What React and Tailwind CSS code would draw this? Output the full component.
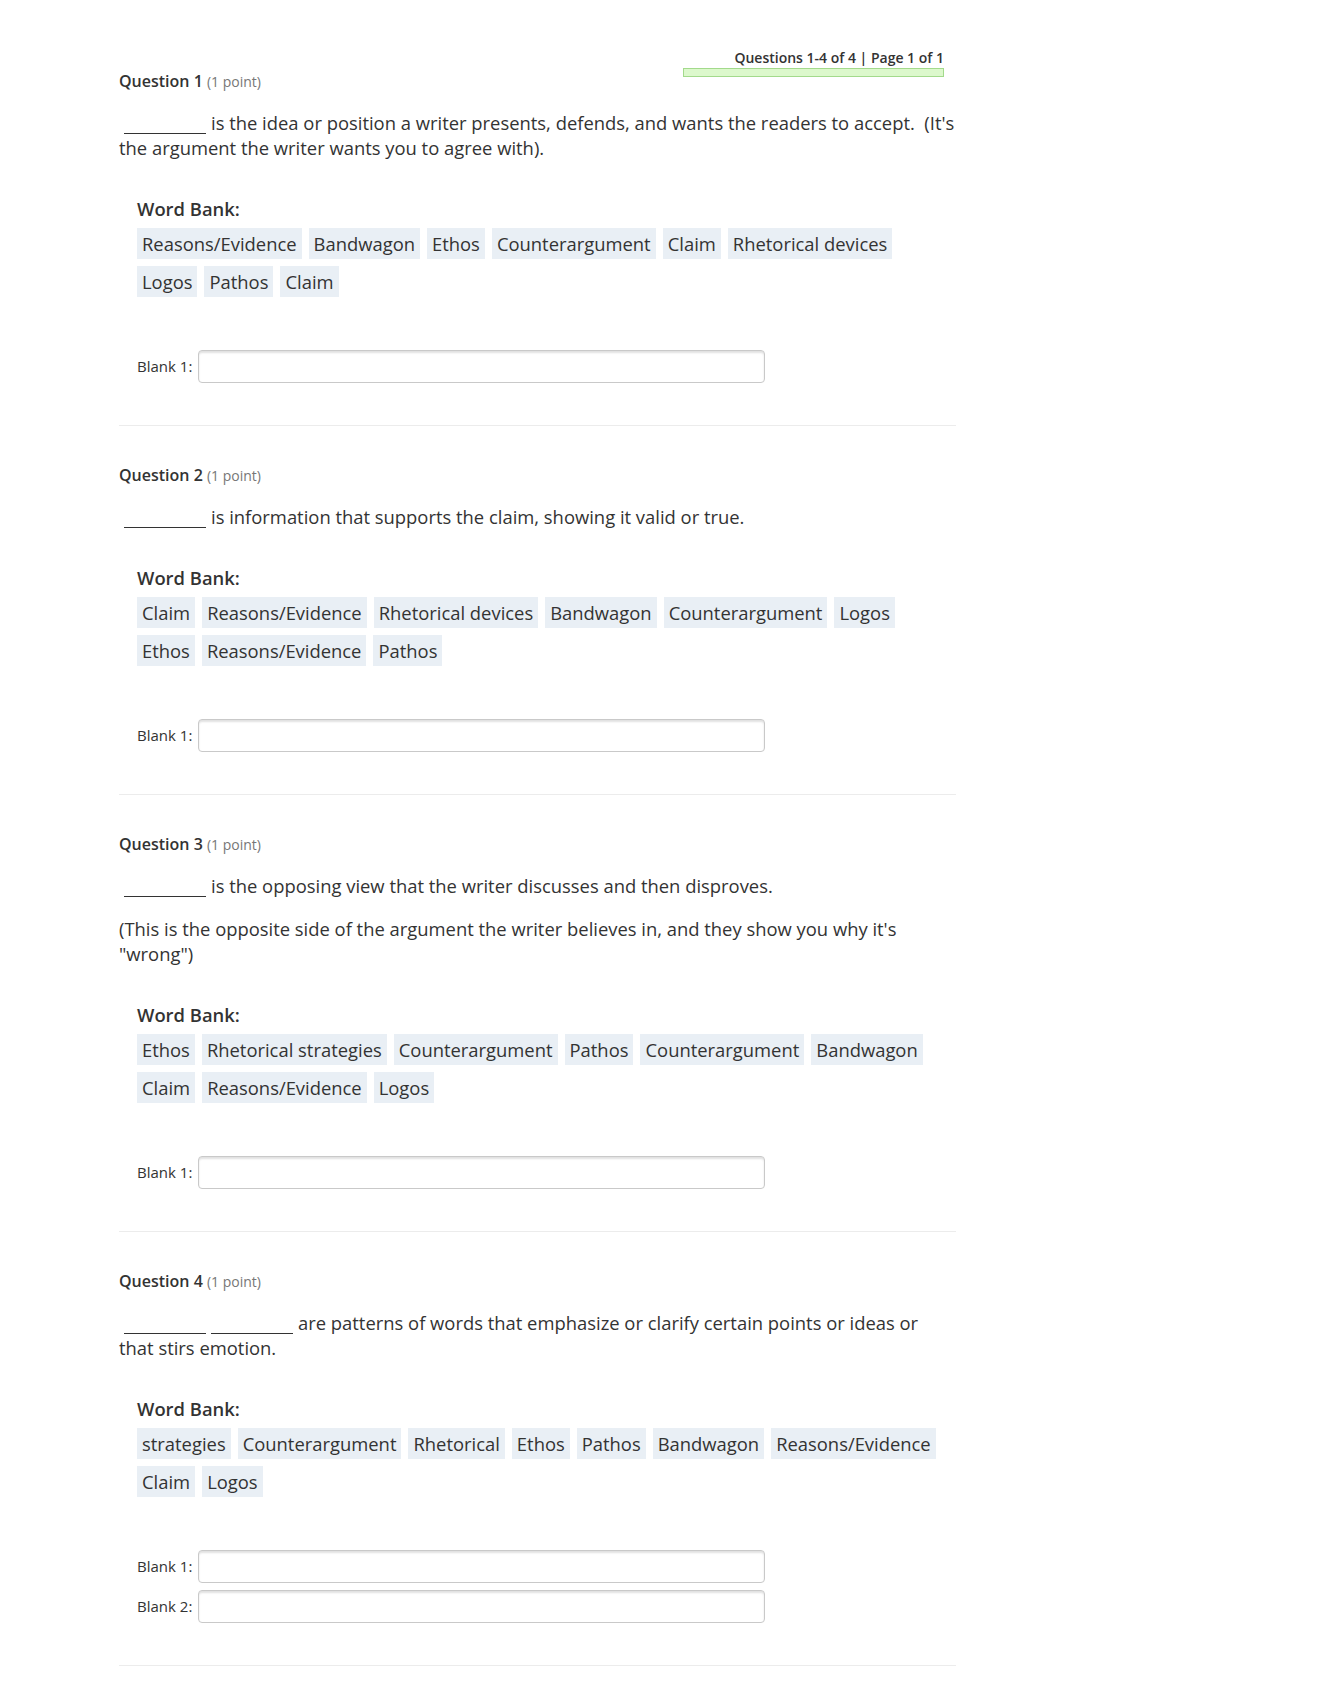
import React from 'react'

const questions = [
  {
    num: 1,
    blanks: 1,
    lines: ['is the idea or position a writer presents, defends, and wants the readers to accept.\u00a0 (It\'s', 'the argument the writer wants you to agree with).'],
    extra: null,
    bank: ['Reasons/Evidence', 'Bandwagon', 'Ethos', 'Counterargument', 'Claim', 'Rhetorical devices', 'Logos', 'Pathos', 'Claim'],
    inputs: 1,
  },
  {
    num: 2,
    blanks: 1,
    lines: ['is information that supports the claim, showing it valid or true.'],
    extra: null,
    bank: ['Claim', 'Reasons/Evidence', 'Rhetorical devices', 'Bandwagon', 'Counterargument', 'Logos', 'Ethos', 'Reasons/Evidence', 'Pathos'],
    inputs: 1,
  },
  {
    num: 3,
    blanks: 1,
    lines: ['is the opposing view that the writer discusses and then disproves.'],
    extra: ['(This is the opposite side of the argument the writer believes in, and they show you why it\'s', '"wrong")'],
    bank: ['Ethos', 'Rhetorical strategies', 'Counterargument', 'Pathos', 'Counterargument', 'Bandwagon', 'Claim', 'Reasons/Evidence', 'Logos'],
    inputs: 1,
  },
  {
    num: 4,
    blanks: 2,
    lines: ['are patterns of words that emphasize or clarify certain points or ideas or', 'that stirs emotion.'],
    extra: null,
    bank: ['strategies', 'Counterargument', 'Rhetorical', 'Ethos', 'Pathos', 'Bandwagon', 'Reasons/Evidence', 'Claim', 'Logos'],
    inputs: 2,
  },
]

function Blank() {
  return <span className="inline-block w-[82px] h-px bg-[#333] align-[-4px] mr-[5px]" />
}

function Lines({ lines }) {
  return lines.map((l, i) => (
    <React.Fragment key={i}>
      {l}
      {i < lines.length - 1 && <br />}
    </React.Fragment>
  ))
}

function Question({ q }) {
  return (
    <div>
      {/* Prompt */}
      <p className="mt-[18px] text-[18.4px] leading-[25px] text-[#333] whitespace-nowrap">
        <span className="inline-block w-[5px]" />
        {Array.from({ length: q.blanks }).map((_, i) => <Blank key={i} />)}
        <Lines lines={q.lines} />
      </p>
      {q.extra && (
        <p className="mt-[18px] text-[18.4px] leading-[25px] text-[#333] whitespace-nowrap">
          <Lines lines={q.extra} />
        </p>
      )}

      {/* Word bank */}
      <div className="ml-[18px] mt-[37px]">
        <div className="text-[18.4px] leading-[24px] font-semibold text-[#333]">Word Bank:</div>
        <div className="mt-[7px] flex flex-wrap gap-x-[7px] gap-y-[7px] w-[819px]">
          {q.bank.map((w, i) => (
            <span key={i} className="bg-[#e9eff5] px-[5px] h-[31px] leading-[31px] text-[18.4px] text-[#333]">{w}</span>
          ))}
        </div>
      </div>

      {/* Blanks */}
      <div className="ml-[18px] mt-[53px] flex flex-col gap-[7px]">
        {Array.from({ length: q.inputs }).map((_, i) => (
          <div key={i} className="flex items-center gap-[5px]">
            <label className="text-[15px] text-[#333] w-[56px]">Blank {i + 1}:</label>
            <input
              type="text"
              className="w-[567px] h-[33px] rounded-[4px] border border-[#c9c9c9] bg-white shadow-[inset_0_2px_2px_rgba(0,0,0,0.12)] outline-none px-2"
            />
          </div>
        ))}
      </div>

      <div className="mt-[42px] h-px bg-[#ececec]" />
    </div>
  )
}

export default function App() {
  return (
    <div className="min-h-screen bg-white font-['Open_Sans',sans-serif]">
      <div className="ml-[119px] w-[837px] pt-[49px]">
        {questions.map((q, idx) => (
          <div key={q.num}>
            <div className={idx === 0 ? 'flex items-start justify-between' : 'flex items-start justify-between mt-[39px]'}>
              <div className={idx === 0 ? 'mt-[22px] text-[16px] leading-[20px] font-semibold text-[#333]' : 'text-[16px] leading-[20px] font-semibold text-[#333]'}>
                Question {q.num} <span className="text-[14px] font-normal text-[#777]">(1 point)</span>
              </div>
              {idx === 0 && (
                <div className="mr-[12px] flex flex-col items-end">
                  <div className="text-[14px] leading-[18px] font-semibold text-[#333]">Questions 1-4 of 4 | Page 1 of 1</div>
                  <div className="mt-[1px] w-[261px] h-[9px] bg-[#dcf8cc] border border-[#a3da8c]" />
                </div>
              )}
            </div>
            <Question q={q} />
          </div>
        ))}
      </div>
    </div>
  )
}
